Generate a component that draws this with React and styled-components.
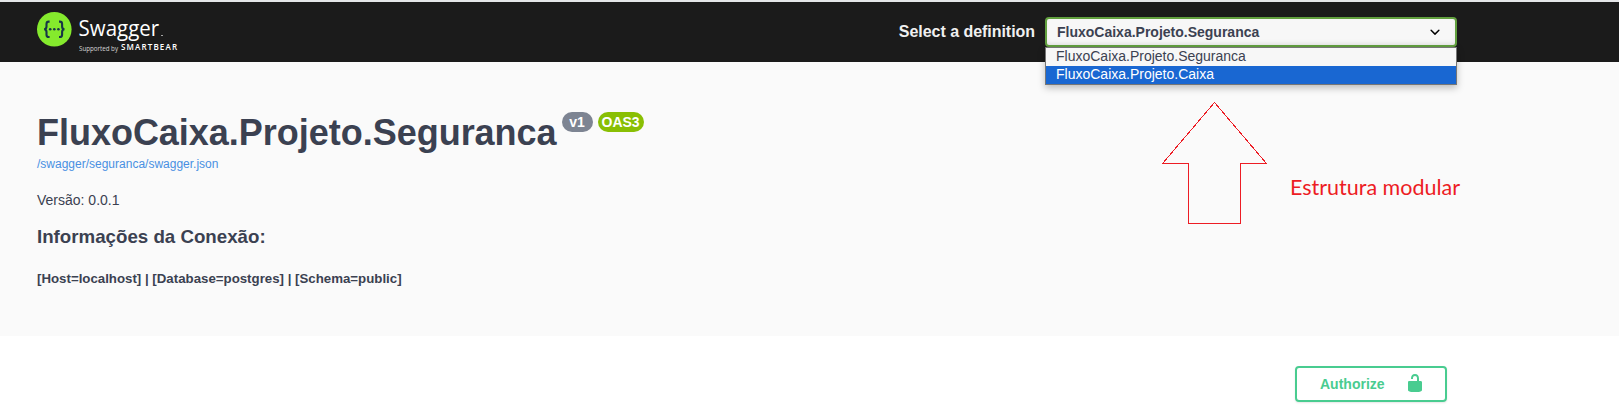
import React from "react";
import styled, { createGlobalStyle } from "styled-components";

const GlobalStyle = createGlobalStyle`
  *, *::before, *::after { box-sizing: border-box; }
  html, body { margin: 0; background: #fff; }
  body {
    color: #3b4151;
    font-family: "Liberation Sans", Arial, sans-serif;
    overflow: hidden;
  }
  h1, h3, h5, p { margin: 0; }
`;

const Page = styled.div`
  height: 415px;
  overflow: hidden;
  position: relative;
`;

const Topbar = styled.header`
  height: 62px;
  padding: 10px 162px 0 37px;
  display: flex;
  justify-content: space-between;
  align-items: flex-start;
  background: #1b1b1b;
  border-top: 2px solid #e4e6e8;
`;

const Logo = styled.div`
  display: flex;
  gap: 7px;
  color: #fff;
`;

const LogoMark = styled.svg`
  display: block;
  width: 35px;
  height: 35px;
`;

const LogoType = styled.svg`
  display: block;
  width: 104px;
  height: 44px;
  overflow: visible;
  font-family: "Open Sans", "Noto Sans", sans-serif;
  fill: #fff;
`;

const Definition = styled.div`
  display: flex;
  gap: 10px;
  padding-top: 5px;
`;

const DefinitionLabel = styled.span`
  font-size: 16px;
  font-weight: 700;
  line-height: 18px;
  letter-spacing: -0.04px;
  color: #f0f0f0;
  padding-top: 6px;
  white-space: nowrap;
`;

const SelectWrap = styled.div`
  position: relative;
  width: 412px;
`;

const SelectBox = styled.div`
  height: 30px;
  display: flex;
  align-items: center;
  justify-content: space-between;
  padding: 0 10px;
  border: 2px solid #62a03f;
  border-radius: 4px;
  background: #f7f7f7;
  box-shadow: inset 0 -3px 6px -3px rgba(0, 0, 0, 0.12);
  font-size: 14px;
  font-weight: 700;
  line-height: 16px;
`;

const Options = styled.div`
  position: absolute;
  top: 30px;
  left: 0;
  width: 412px;
  border: 1px solid #767676;
  background: #f7f7f7;
  box-shadow: 0 3px 7px rgba(0, 0, 0, 0.25);
  z-index: 2;
`;

const Option = styled.div`
  height: 18px;
  padding-left: 10px;
  font-size: 14px;
  line-height: 16px;
  color: ${(p) => (p.$active ? "#fff" : "#3b4151")};
  background: ${(p) => (p.$active ? "#1967d2" : "transparent")};
`;

const Info = styled.section`
  height: 274px;
  padding: 50px 37px 0;
  background: #fafafa;
`;

const Title = styled.h1`
  display: flex;
  align-items: flex-start;
  font-size: 36px;
  line-height: 41px;
  letter-spacing: -0.02px;
  font-weight: 700;
`;

const Badge = styled.span`
  height: 20px;
  width: ${(p) => p.$width}px;
  margin-left: 5px;
  border-radius: 57px;
  background: ${(p) => p.$color};
  color: #fff;
  font-size: 14px;
  line-height: 21px;
  text-align: center;
`;

const SpecLink = styled.a`
  display: block;
  margin-top: 3px;
  font-size: 12px;
  line-height: 16px;
  color: #4990e2;
`;

const Version = styled.p`
  margin-top: 18px;
  font-size: 14px;
  line-height: 20px;
`;

const Subtitle = styled.h3`
  margin-top: 15px;
  font-size: 18.72px;
  line-height: 24px;
`;

const Connection = styled.h5`
  margin-top: 20px;
  font-size: 13.28px;
  line-height: 20px;
`;

const Actions = styled.section`
  display: flex;
  justify-content: flex-end;
  padding: 30px 172px 0 0;
`;

const AuthorizeButton = styled.button`
  width: 152px;
  height: 36px;
  display: flex;
  align-items: center;
  justify-content: space-between;
  padding: 0 20px 0 23px;
  border: 2px solid #49cc90;
  border-radius: 4px;
  background: transparent;
  color: #49cc90;
  font: 700 14px "Liberation Sans", Arial, sans-serif;
  box-shadow: 0 1px 2px rgba(0, 0, 0, 0.1);
`;

const Icon = styled.svg`
  display: block;
  width: 20px;
  height: 20px;
  fill: ${(p) => p.$fill};
`;

const LockIcon = styled(Icon)`
  margin-top: -2px;
`;

const Arrow = styled.svg`
  position: absolute;
  left: 1162px;
  top: 102px;
  width: 105px;
  height: 122px;
`;

const Note = styled.p`
  position: absolute;
  left: 1290px;
  top: 171px;
  color: #ed1c24;
  font-family: Lato, sans-serif;
  font-size: 21.5px;
  line-height: 32px;
  white-space: nowrap;
`;

export default function App() {
  return (
    <Page>
      <GlobalStyle />
      <Topbar>
        <Logo>
          <LogoMark viewBox="0 0 35 35">
            <circle cx="17.3" cy="17.3" r="17.3" fill="#85ea2d" />
            <g fill="none" stroke="#173647" strokeWidth="2.1">
              <path d="M12.6 9.6h-.8c-1.7 0-2.3.8-2.3 2.3v2.6c0 1.8-.7 2.6-2.3 2.8 1.6.2 2.3 1 2.3 2.8v2.6c0 1.5.6 2.3 2.3 2.3h.8" />
              <path d="M22 9.6h.8c1.7 0 2.3.8 2.3 2.3v2.6c0 1.8.7 2.6 2.3 2.8-1.6.2-2.3 1-2.3 2.8v2.6c0 1.5-.6 2.3-2.3 2.3H22" />
            </g>
            <g fill="#173647">
              <circle cx="13.2" cy="17.3" r="1.3" />
              <circle cx="17.3" cy="17.3" r="1.3" />
              <circle cx="21.4" cy="17.3" r="1.3" />
            </g>
          </LogoMark>
          <LogoType viewBox="0 0 104 44">
            <text x="-0.4" y="24.3" fontSize="22.5" fontWeight="400" textLength="80.5" lengthAdjust="spacingAndGlyphs">Swagger</text>
            <rect x="82" y="23" width="2" height="1" opacity="0.6" />
            <text x="0" y="38.6" fontSize="6.4" opacity="0.8" textLength="39" lengthAdjust="spacingAndGlyphs">Supported by</text>
            <text x="42" y="38.4" fontSize="8" fontWeight="600" textLength="56">SMARTBEAR</text>
          </LogoType>
        </Logo>
        <Definition>
          <DefinitionLabel>Select a definition</DefinitionLabel>
          <SelectWrap>
            <SelectBox>
              FluxoCaixa.Projeto.Seguranca
              <Icon viewBox="0 0 20 20" $fill="#000">
                <path d="M13.418 7.859a.695.695 0 0 1 .978 0 .68.68 0 0 1 0 .969l-3.908 3.83a.697.697 0 0 1-.979 0l-3.908-3.83a.68.68 0 0 1 0-.969.695.695 0 0 1 .978 0L10 11l3.418-3.141z" />
              </Icon>
            </SelectBox>
            <Options>
              <Option>FluxoCaixa.Projeto.Seguranca</Option>
              <Option $active>FluxoCaixa.Projeto.Caixa</Option>
            </Options>
          </SelectWrap>
        </Definition>
      </Topbar>
      <Info>
        <Title>
          FluxoCaixa.Projeto.Seguranca
          <Badge $width={31} $color="#7d8492">v1</Badge>
          <Badge $width={46} $color="#89bf04">OAS3</Badge>
        </Title>
        <SpecLink>/swagger/seguranca/swagger.json</SpecLink>
        <Version>Versão: 0.0.1</Version>
        <Subtitle>Informações da Conexão:</Subtitle>
        <Connection>[Host=localhost] | [Database=postgres] | [Schema=public]</Connection>
      </Info>
      <Actions>
        <AuthorizeButton>
          Authorize
          <LockIcon viewBox="0 0 20 20" $fill="#49cc90">
            <path d="M15.8 8H14V5.6C14 2.703 12.665 1 10 1 7.334 1 6 2.703 6 5.6V6h2v-.801C8 3.754 8.797 3 10 3c1.203 0 2 .754 2 2.199V8H4c-.553 0-1 .646-1 1.199V17c0 .549.428 1.139.951 1.307l1.197.387C5.672 18.861 6.55 19 7.1 19h5.8c.549 0 1.428-.139 1.951-.307l1.196-.387c.524-.167.953-.757.953-1.306V9.199C17 8.646 16.352 8 15.8 8z" />
          </LockIcon>
        </AuthorizeButton>
      </Actions>
      <Arrow viewBox="0 0 105 122">
        <path
          d="M52.5.5L.5 61.5h26v60h52v-60h26z"
          fill="none"
          stroke="#ed1c24"
          strokeWidth="1"
          shapeRendering="crispEdges"
        />
      </Arrow>
      <Note>Estrutura modular</Note>
    </Page>
  );
}
